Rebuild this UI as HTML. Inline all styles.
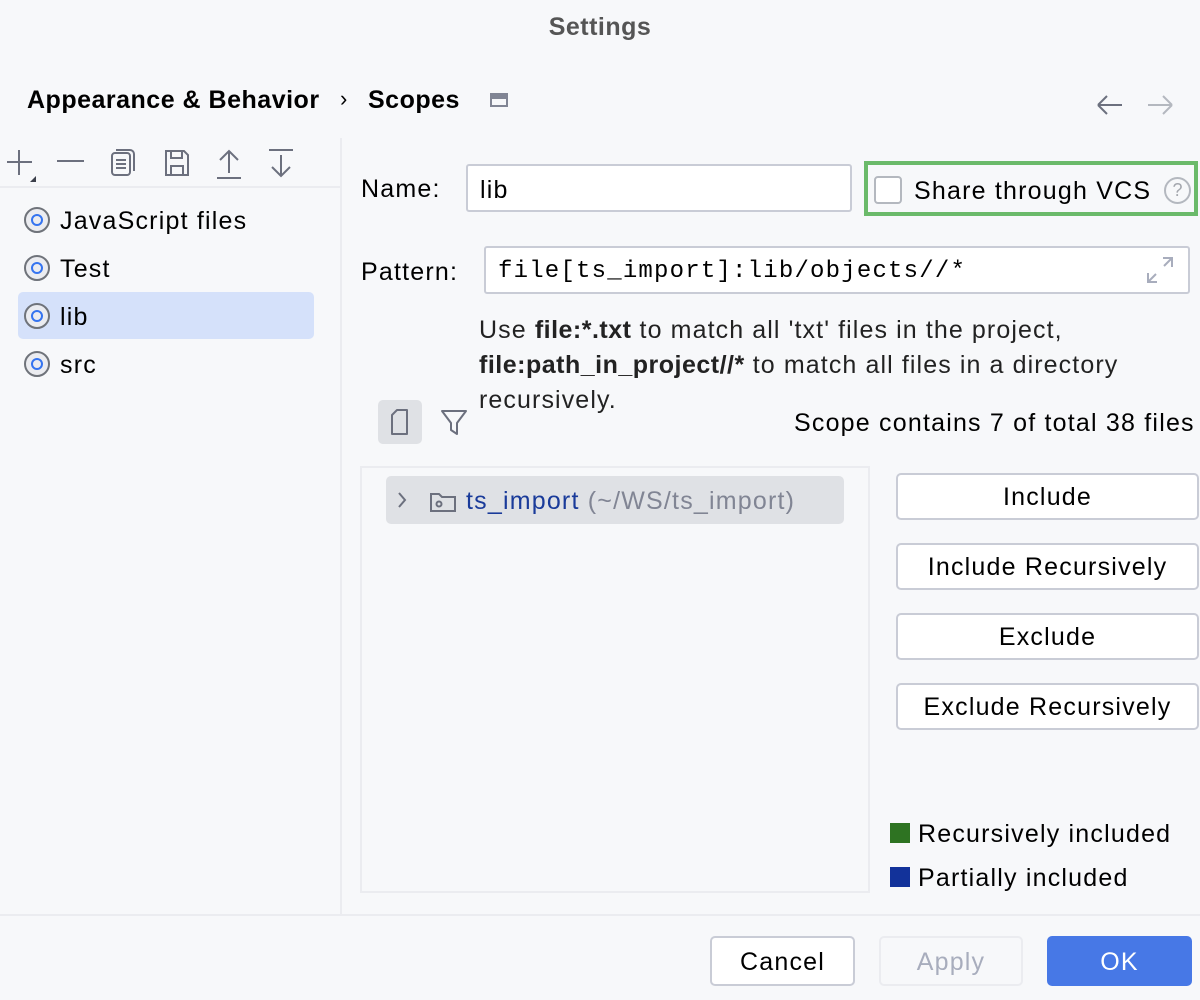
<!DOCTYPE html>
<html><head><style>
*{margin:0;padding:0;box-sizing:border-box}
body{width:1200px;height:1000px;background:#f7f8fa;font-family:"Liberation Sans",sans-serif;color:#000;position:relative;overflow:hidden;font-size:25px;letter-spacing:1.2px}
.a{position:absolute;white-space:nowrap}
.btn{position:absolute;background:#fff;border:2px solid #c9ccd6;border-radius:5px;text-align:center;font-size:25px}
.radio{position:absolute;width:26px;height:26px;border-radius:50%;border:2px solid #6f737a;background:#ebecf0}
.radio::after{content:"";position:absolute;left:5px;top:5px;width:12px;height:12px;border-radius:50%;border:2.5px solid #3574f0;box-sizing:border-box}
b,.bd{letter-spacing:0.5px}
</style></head><body>
<div class="a bd" style="left:0;width:1200px;top:13px;text-align:center;font-weight:bold;color:#555;font-size:25px">Settings</div>
<div class="a bd" style="left:27px;top:86px;font-weight:bold">Appearance &amp; Behavior</div>
<div class="a" style="left:340px;top:86px;font-size:22px">›</div>
<div class="a bd" style="left:368px;top:86px;font-weight:bold">Scopes</div>
<div class="a" style="left:490px;top:93px;width:18px;height:14px;border:2px solid #818594"><div style="height:4px;background:#818594"></div></div>
<svg class="a" style="left:1095px;top:92px" width="80" height="26" viewBox="0 0 80 26"><path d="M3 13H27M3 13L12 4M3 13L12 22" stroke="#6c707e" stroke-width="2" fill="none"/><path d="M53 13H77M77 13L68 4M77 13L68 22" stroke="#b4b8bf" stroke-width="2" fill="none"/></svg>
<div class="a" style="left:340px;top:138px;width:2px;height:776px;background:#ebecf0"></div>
<svg class="a" style="left:0;top:145px" width="300" height="40" viewBox="0 0 300 40"><g stroke="#6c707e" stroke-width="2" fill="none">
<path d="M7 17H32M19 5V30"/><path d="M57 16H84"/>
<rect x="112" y="8" width="18" height="22" rx="3"/><path d="M116 5H130a4 4 0 0 1 4 4V26M116 15h10M116 19h10M116 23h10"/>
<path d="M166 6H184L188 10V30H166Z"/><path d="M171 6V13H182V6M171 30V21H183V30"/>
<path d="M229 28V6M220 15L229 6L238 15M217 33H241"/>
<path d="M281 10V31M272 22L281 31L290 22M269 5H293"/></g>
<path d="M30 37L36 31V37Z" fill="#3b3f4a"/></svg>
<div class="a" style="left:0;top:186px;width:340px;height:2px;background:#ebecf0"></div>
<div class="a" style="left:18px;top:292px;width:296px;height:47px;background:#d5e1fa;border-radius:5px"></div>
<div class="radio" style="left:24px;top:207px"></div><div class="a" style="left:60px;top:207px">JavaScript files</div>
<div class="radio" style="left:24px;top:255px"></div><div class="a" style="left:60px;top:255px">Test</div>
<div class="radio" style="left:24px;top:303px"></div><div class="a" style="left:60px;top:303px">lib</div>
<div class="radio" style="left:24px;top:351px"></div><div class="a" style="left:60px;top:351px">src</div>

<div class="a" style="left:361px;top:175px">Name:</div>
<div class="a" style="left:466px;top:164px;width:386px;height:48px;background:#fff;border:2px solid #c9ccd6;border-radius:3px;padding:10px 12px">lib</div>
<div class="a" style="left:864px;top:161px;width:334px;height:55px;border:4px solid #6bba6a"></div>
<div class="a" style="left:874px;top:176px;width:28px;height:28px;background:#fff;border:2px solid #b4b8bf;border-radius:4px"></div>
<div class="a" style="left:914px;top:177px">Share through VCS</div>
<div class="a" style="left:1164px;top:177px;width:27px;height:27px;border:2px solid #b4b8bf;border-radius:50%;color:#a3a6ad;font-size:18px;letter-spacing:0;text-align:center;line-height:23px">?</div>

<div class="a" style="left:361px;top:258px">Pattern:</div>
<div class="a" style="left:484px;top:246px;width:706px;height:48px;background:#fff;border:2px solid #c9ccd6;border-radius:3px;padding:10px 12px;font-family:'Liberation Mono',monospace;font-size:24px;letter-spacing:1.2px">file[ts_import]:lib/objects//*</div>
<svg class="a" style="left:1144px;top:254px" width="32" height="32" viewBox="0 0 32 32"><path d="M19 4H28V13M28 4L20 12M4 19V28H13M4 28L12 20" stroke="#a8adbd" stroke-width="2" fill="none"/></svg>
<div class="a" style="left:479px;top:313px;line-height:35px;color:#222;letter-spacing:1.1px">Use <b>file:*.txt</b> to match all 'txt' files in the project,<br><b>file:path_in_project//*</b> to match all files in a directory<br>recursively.</div>

<div class="a" style="left:378px;top:400px;width:44px;height:44px;background:#dfe1e5;border-radius:5px"></div>
<svg class="a" style="left:378px;top:400px" width="100" height="44" viewBox="0 0 100 44"><g stroke="#6c707e" stroke-width="2" fill="none" stroke-linejoin="round"><path d="M14 15L19 10H29V34H14Z"/><path d="M64 11H88L79 23V34L73 30V23Z"/></g></svg>
<div class="a" style="left:794px;top:409px">Scope contains 7 of total 38 files</div>

<div class="a" style="left:360px;top:466px;width:510px;height:427px;border:2px solid #ebecf0;background:#f7f8fa"></div>
<div class="a" style="left:386px;top:476px;width:458px;height:48px;background:#dfe1e5;border-radius:5px"></div>
<svg class="a" style="left:393px;top:488px" width="70" height="26" viewBox="0 0 70 26"><g stroke="#6c707e" stroke-width="2" fill="none"><path d="M6 5L12 12L6 19"/><path d="M38 6H46L49 9H62V23H38Z"/><circle cx="46" cy="16" r="2.5"/></g></svg>
<div class="a" style="left:466px;top:487px"><span style="color:#1a3b9a">ts_import</span> <span style="color:#818594">(~/WS/ts_import)</span></div>

<div class="btn" style="left:896px;top:473px;width:303px;height:47px;line-height:45px">Include</div>
<div class="btn" style="left:896px;top:543px;width:303px;height:47px;line-height:45px">Include Recursively</div>
<div class="btn" style="left:896px;top:613px;width:303px;height:47px;line-height:45px">Exclude</div>
<div class="btn" style="left:896px;top:683px;width:303px;height:47px;line-height:45px">Exclude Recursively</div>

<div class="a" style="left:890px;top:823px;width:20px;height:20px;background:#2e7322"></div>
<div class="a" style="left:918px;top:820px">Recursively included</div>
<div class="a" style="left:890px;top:867px;width:20px;height:20px;background:#12329a"></div>
<div class="a" style="left:918px;top:864px">Partially included</div>

<div class="a" style="left:0;top:914px;width:1200px;height:2px;background:#ebecf0"></div>
<div class="btn" style="left:710px;top:936px;width:145px;height:50px;line-height:49px">Cancel</div>
<div class="btn" style="left:879px;top:936px;width:144px;height:50px;line-height:49px;background:#f7f8fa;border-color:#ebecf0;color:#a8adbd">Apply</div>
<div class="btn" style="left:1047px;top:936px;width:145px;height:50px;line-height:53px;background:#4778e6;border:none;color:#fff">OK</div>
</body></html>
